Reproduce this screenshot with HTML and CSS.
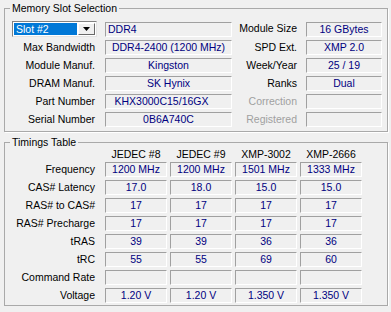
FILE: index.html
```html
<!DOCTYPE html>
<html lang="en">

<head>
    <meta charset="UTF-8">
    <title>SPD</title>
    <link rel="stylesheet" href="styles.css">
</head>

<body>
    <!-- Memory slot selection -->
    <fieldset class="group">
        <legend>Memory Slot Selection</legend>
        <div class="slot-grid">
            <div class="combo">
                <span class="combo-value">Slot #2</span>
                <span class="combo-btn">
                    <svg width="7" height="4" viewBox="0 0 7 4"><path d="M0 0H7L3.5 4Z" fill="#000"/></svg>
                </span>
            </div>
            <div class="field align-left">DDR4</div>
            <div class="label">Module Size</div>
            <div class="field">16 GBytes</div>

            <div class="label">Max Bandwidth</div>
            <div class="field">DDR4-2400 (1200 MHz)</div>
            <div class="label">SPD Ext.</div>
            <div class="field">XMP 2.0</div>

            <div class="label">Module Manuf.</div>
            <div class="field">Kingston</div>
            <div class="label">Week/Year</div>
            <div class="field">25 / 19</div>

            <div class="label">DRAM Manuf.</div>
            <div class="field">SK Hynix</div>
            <div class="label">Ranks</div>
            <div class="field">Dual</div>

            <div class="label">Part Number</div>
            <div class="field part">KHX3000C15/16GX</div>
            <div class="label disabled">Correction</div>
            <div class="field"></div>

            <div class="label">Serial Number</div>
            <div class="field">0B6A740C</div>
            <div class="label disabled">Registered</div>
            <div class="field"></div>
        </div>
    </fieldset>

    <!-- Timings -->
    <fieldset class="group timings">
        <legend>Timings Table</legend>
        <div class="timing-grid">
            <div></div>
            <div class="head">JEDEC #8</div>
            <div class="head">JEDEC #9</div>
            <div class="head">XMP-3002</div>
            <div class="head">XMP-2666</div>

            <div class="label">Frequency</div>
            <div class="field">1200 MHz</div>
            <div class="field">1200 MHz</div>
            <div class="field">1501 MHz</div>
            <div class="field">1333 MHz</div>

            <div class="label">CAS# Latency</div>
            <div class="field">17.0</div>
            <div class="field">18.0</div>
            <div class="field">15.0</div>
            <div class="field">15.0</div>

            <div class="label">RAS# to CAS#</div>
            <div class="field">17</div>
            <div class="field">17</div>
            <div class="field">17</div>
            <div class="field">17</div>

            <div class="label">RAS# Precharge</div>
            <div class="field">17</div>
            <div class="field">17</div>
            <div class="field">17</div>
            <div class="field">17</div>

            <div class="label">tRAS</div>
            <div class="field">39</div>
            <div class="field">39</div>
            <div class="field">36</div>
            <div class="field">36</div>

            <div class="label">tRC</div>
            <div class="field">55</div>
            <div class="field">55</div>
            <div class="field">69</div>
            <div class="field">60</div>

            <div class="label">Command Rate</div>
            <div class="field"></div>
            <div class="field"></div>
            <div class="field"></div>
            <div class="field"></div>

            <div class="label">Voltage</div>
            <div class="field">1.20 V</div>
            <div class="field">1.20 V</div>
            <div class="field">1.350 V</div>
            <div class="field">1.350 V</div>
        </div>
    </fieldset>
</body>

</html>
```

FILE: styles.css
```css
body {
    font-family: Tahoma, "Liberation Sans", Arial, sans-serif;
    font-size: 10.5px;
    margin: 0;
    padding: 2px 3px 0 4px;
    background-color: #f0f0f0;
    color: #000;
}

.group {
    margin: 0;
    padding: 0 0 4px 0;
    border: 1px solid #a9a9a9;
    box-shadow: 1px 1px 0 #fff;
    min-width: 0;
}

.group legend {
    margin-left: 5px;
    padding: 0 2px;
    line-height: 13px;
    background-color: #f0f0f0;
}

.timings {
    margin-top: 4px;
    padding-bottom: 2px;
}

.slot-grid {
    display: grid;
    grid-template-columns: 100px 127px 74px 76px;
    grid-template-rows: 16px repeat(5, 15px);
    row-gap: 3px;
    padding-top: 6px;
}

.timing-grid {
    display: grid;
    grid-template-columns: 97px repeat(4, 62px);
    grid-template-rows: 10px repeat(8, 15px);
    column-gap: 3px;
    row-gap: 3px;
}

.label {
    line-height: 15px;
    text-align: right;
    padding-right: 10px;
    white-space: nowrap;
}

.slot-grid .label:nth-child(4n+3) {
    padding-right: 9px;
}

.timing-grid .label {
    padding-right: 7px;
}

.label.disabled {
    color: #a0a0a0;
}

.head {
    line-height: 10px;
    text-align: center;
    white-space: nowrap;
}

.field {
    height: 15px;
    box-sizing: border-box;
    line-height: 13px;
    border: 1px solid;
    border-color: #a0a0a0 #fff #fff #a0a0a0;
    color: #000080;
    text-align: center;
    white-space: nowrap;
    overflow: hidden;
    align-self: end;
}

.field.align-left {
    text-align: left;
    padding-left: 2px;
}

.field.part {
    padding-right: 14px;
}

.combo {
    display: flex;
    margin-left: 7px;
    width: 85px;
    height: 16px;
    box-sizing: border-box;
    border: 1px solid;
    border-color: #828282 #e3e3e3 #e3e3e3 #828282;
    background-color: #fff;
    padding: 1px;
}

.combo-value {
    flex: 1;
    background-color: #0078d7;
    color: #fff;
    line-height: 12px;
    padding-left: 2px;
    margin-right: 1px;
}

.combo-btn {
    width: 17px;
    box-sizing: border-box;
    border: 1px solid;
    border-color: #fff #696969 #696969 #fff;
    background-color: #f0f0f0;
    display: flex;
    align-items: center;
    justify-content: center;
}
```
